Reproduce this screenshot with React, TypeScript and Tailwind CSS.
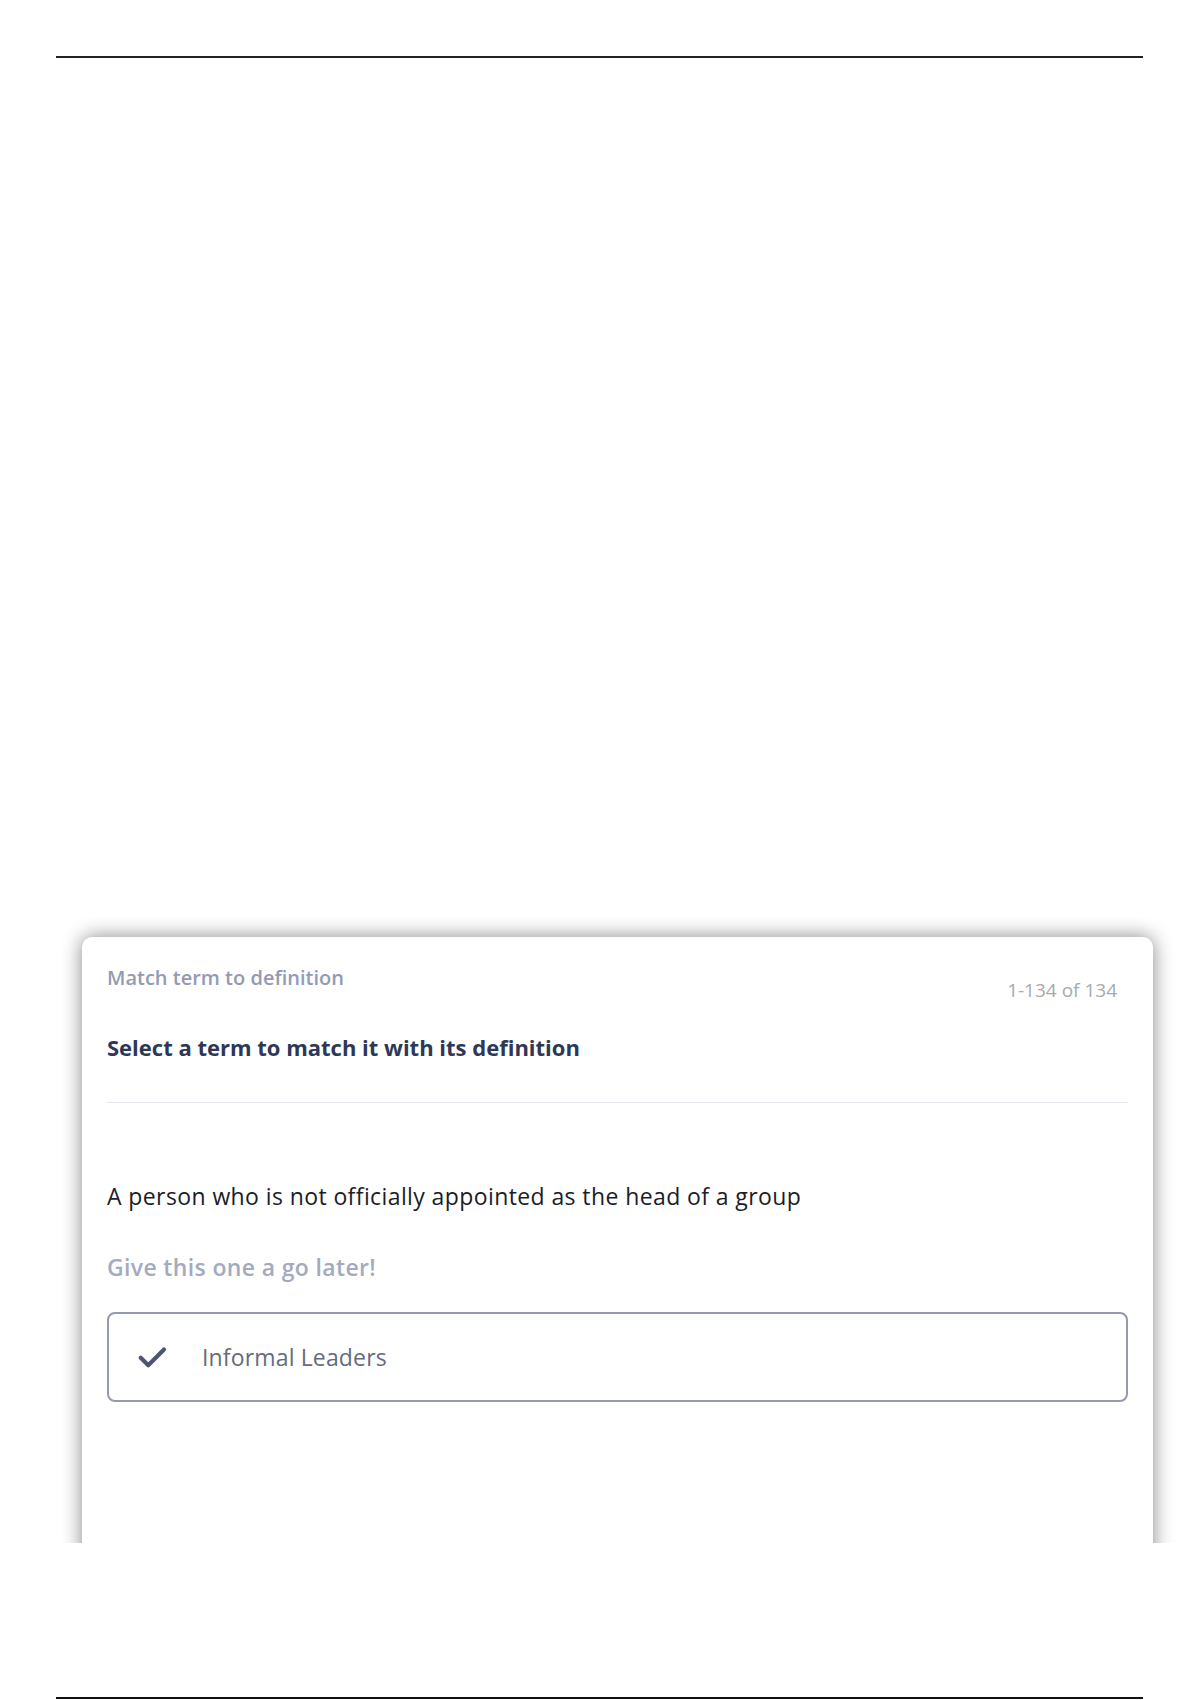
import React from "react";

export default function App() {
  return (
    <div
      className="w-[1200px] h-[1700px] bg-white flex flex-col"
      style={{ fontFamily: "'Open Sans', Lato, sans-serif" }}
    >
      <div className="mt-[56px] ml-[56px] w-[1087px] h-[2px] bg-[#222222]" />
      <div className="mt-[859px] ml-[62px] w-[1122px] h-[626px] overflow-hidden pl-[20px] pt-[20px]">
        <div className="w-[1071px] h-[700px] bg-white rounded-[10px] shadow-[0_0_20px_rgba(0,0,0,0.48)] px-[25px] pt-[30px]">
          <div className="flex justify-between">
            <div className="text-[20px] font-semibold text-[#939bb4] leading-[22px]">
              Match term to definition
            </div>
            <div className="mt-[12px] mr-[11px] text-[19px] text-[#a7a9ae] leading-[22px]">
              1-134 of 134
            </div>
          </div>
          <div className="mt-[33px] text-[22px] font-bold text-[#2e3856] leading-[26px]">
            Select a term to match it with its definition
          </div>
          <div className="mt-[42px] h-px bg-[#e6e8ee]" />
          <div className="mt-[80px] text-[23px] tracking-[0.4px] text-[#1a1d28] leading-[26px]">
            A person who is not officially appointed as the head of a group
          </div>
          <div className="mt-[46px] text-[23px] tracking-[0.35px] font-semibold text-[#a3aac0] leading-[24px]">
            Give this one a go later!
          </div>
          <div className="mt-[33px] h-[90px] rounded-[8px] border-2 border-[#9499ad] flex items-center pl-[25px]">
            <svg width="36" height="36" viewBox="0 0 24 24" fill="none" stroke="#4d5572" strokeWidth="2.8" strokeLinecap="round" strokeLinejoin="round">
              <path d="M4.5 12.5l5 5L20 7" />
            </svg>
            <span className="ml-[32px] text-[23px] tracking-[0.15px] text-[#656b7e]">Informal Leaders</span>
          </div>
        </div>
      </div>
      <div className="mt-[154px] ml-[56px] w-[1087px] h-[2px] bg-[#111111]" />
    </div>
  );
}
